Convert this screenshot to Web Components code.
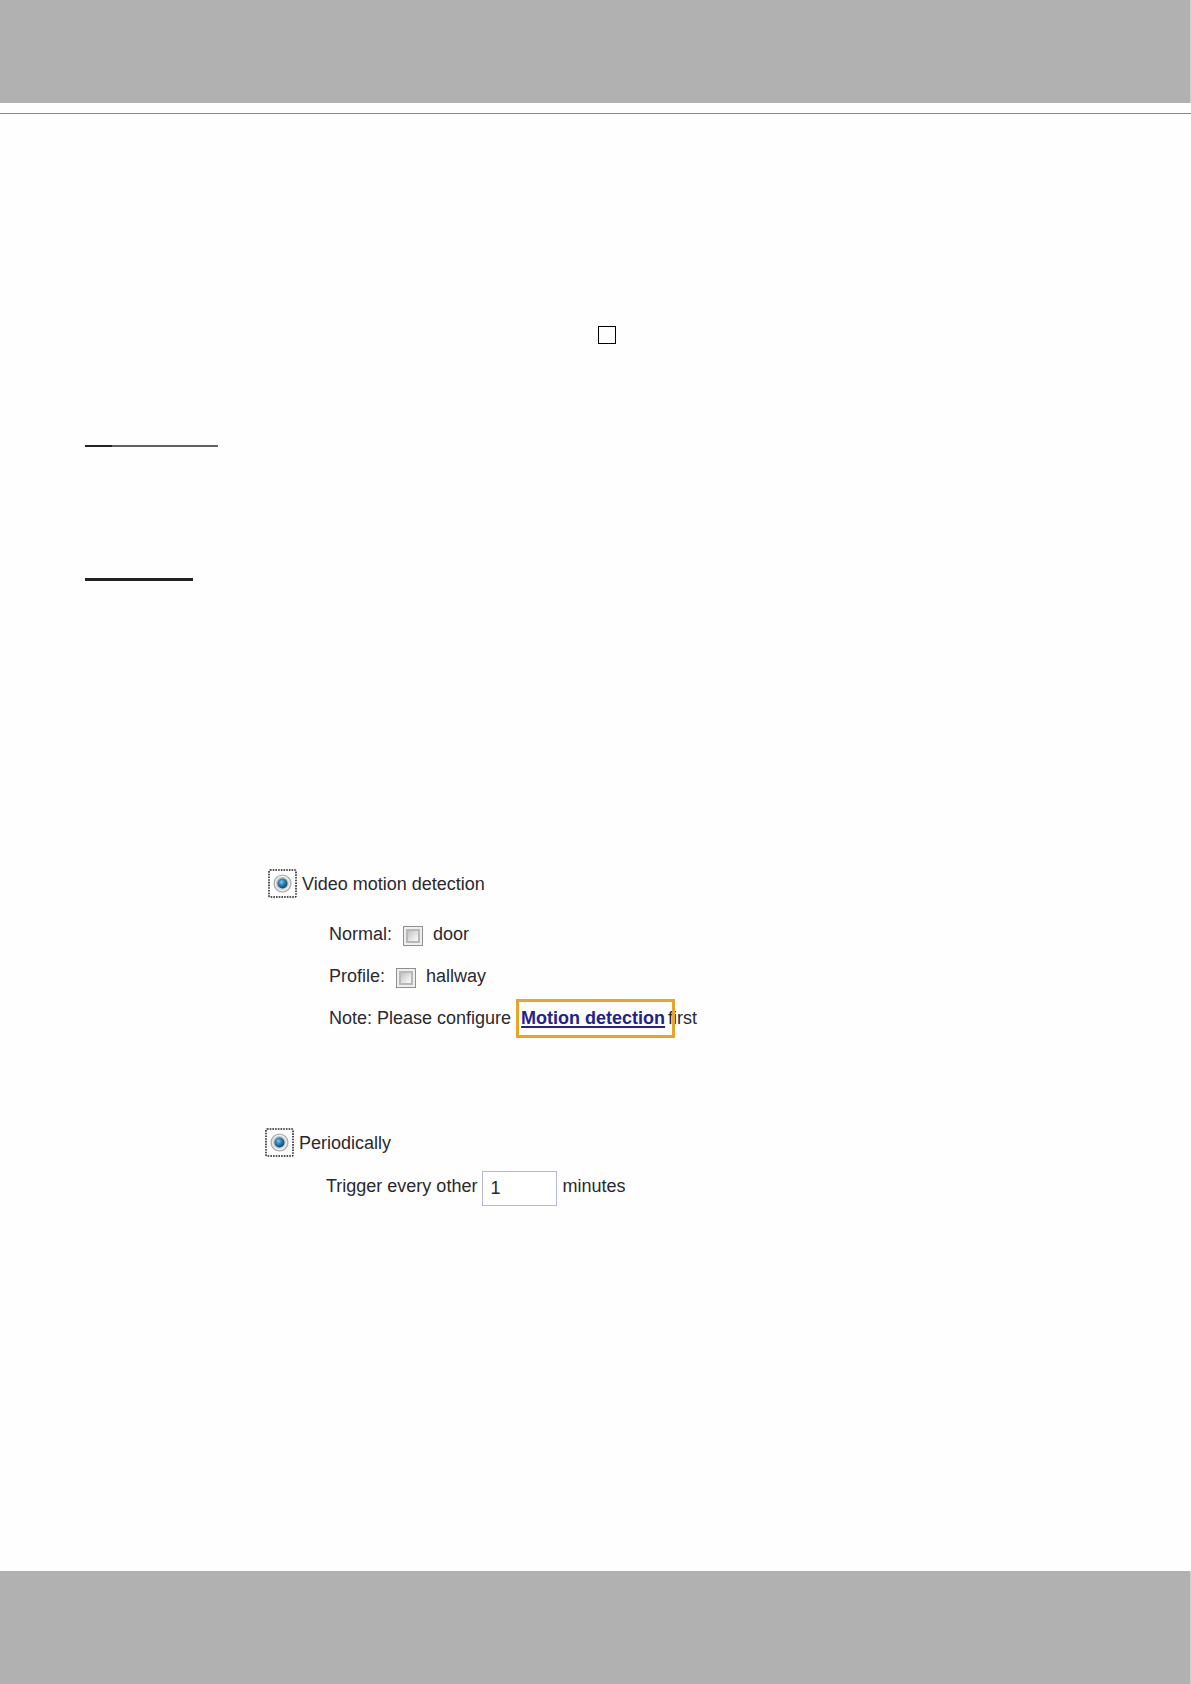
<!DOCTYPE html>
<html lang="en">
<head>
<meta charset="utf-8">
<title>Event trigger</title>
<style>
  body {
    margin: 0;
    background: #fefefe;
    color: #29292f;
    font: 18px/29px "Liberation Sans", Arial, sans-serif;
  }
</style>
</head>
<body>
<manual-page>
  <empty-mark></empty-mark>
  <heading-rule class="first"></heading-rule>
  <heading-rule class="second" heavy></heading-rule>

  <trigger-option class="motion" name="motion" label="Video motion detection">
    <check-row label="Normal:" option="door"></check-row>
    <check-row label="Profile:" option="hallway"></check-row>
    <note-row></note-row>
  </trigger-option>

  <trigger-option class="period" name="period" label="Periodically">
    <period-row value="1"></period-row>
  </trigger-option>
</manual-page>

<script>
class ManualPage extends HTMLElement {
  constructor() {
    super();
    this.attachShadow({ mode: "open" });
    this.shadowRoot.innerHTML = `
    <style>
      :host {
        display: flex;
        flex-direction: column;
        min-height: 100vh;
      }

      header, footer {
        box-sizing: border-box;
        background: #b1b1b1;
        border-right: 1px solid #cfcfcf;
      }

      header {
        height: 103px;
      }

      footer {
        height: 113px;
      }

      hr {
        width: 100%;
        height: 1px;
        margin: 10px 0 0;
        border: 0;
        background: #8a8a8a;
      }

      main {
        flex: 1;
        padding: 212px 85px 0;
      }

      ::slotted(empty-mark) { margin-left: 513px; }
      ::slotted(.first) { margin-top: 101px; }
      ::slotted(.second) { margin-top: 131px; }
      ::slotted(.motion) { margin: 288px 0 0 183px; }
      ::slotted(.period) { margin: 89px 0 0 180px; }
    </style>
    <header></header>
    <hr>
    <main><slot></slot></main>
    <footer></footer>
    `;
  }
}

// Empty square mark in the running text
class EmptyMark extends HTMLElement {
  constructor() {
    super();
    this.attachShadow({ mode: "open" });
    this.shadowRoot.innerHTML = `
    <style>
      :host {
        display: block;
        box-sizing: border-box;
        width: 18px;
        height: 18px;
        border: 1px solid #000;
      }
    </style>
    `;
  }
}

// Underline of a heading: two tone, or one thick dark line when heavy
class HeadingRule extends HTMLElement {
  constructor() {
    super();
    this.attachShadow({ mode: "open" });
    this.shadowRoot.innerHTML = `
    <style>
      :host {
        display: block;
        width: 133px;
        height: 2px;
        background: linear-gradient(to right, #222 27px, #626262 27px);
      }

      :host([heavy]) {
        width: 108px;
        height: 3px;
        background: #222;
      }
    </style>
    `;
  }
}

class TriggerOption extends HTMLElement {
  constructor() {
    super();
    this.attachShadow({ mode: "open" });
  }

  connectedCallback() {
    const name = this.getAttribute("name");
    this.shadowRoot.innerHTML = `
    <style>
      :host {
        display: block;
      }

      .head {
        display: flex;
        align-items: center;
        gap: 5px;
        height: 29px;
      }

      .head label {
        padding-top: 2px;
      }

      .radio {
        display: grid;
        width: 29px;
        height: 29px;
      }

      .radio > * {
        grid-area: 1 / 1;
      }

      input {
        appearance: none;
        width: 29px;
        height: 29px;
        margin: 0;
        outline: none;
      }

      .dot {
        visibility: hidden;
      }

      input:checked + svg .dot {
        visibility: visible;
      }

      svg {
        pointer-events: none;
      }

      .body {
        padding-left: 61px;
      }
    </style>
    <div class="head">
      <span class="radio">
        <input type="radio" id="${name}" name="${name}" checked>
        <svg width="29" height="29" viewBox="0 0 29 29" aria-hidden="true">
          <defs>
            <linearGradient id="ring" x1="0" y1="0" x2="1" y2="1">
              <stop offset="0" stop-color="#b4b4b4"/>
              <stop offset="1" stop-color="#dedede"/>
            </linearGradient>
            <radialGradient id="ball" cx="0.4" cy="0.36" r="0.7">
              <stop offset="0" stop-color="#7fd0f0"/>
              <stop offset="0.35" stop-color="#2f8fc4"/>
              <stop offset="0.75" stop-color="#1a5a88"/>
              <stop offset="1" stop-color="#12324d"/>
            </radialGradient>
          </defs>
          <rect x="1" y="1" width="27" height="27" rx="1" fill="none" stroke="#1c1c1c" stroke-width="1.5" stroke-dasharray="1.6 1.1"/>
          <circle cx="14.5" cy="14.5" r="8.4" fill="#f2f2f2" stroke="#b0b0b0" stroke-width="1.4"/>
          <circle cx="14.5" cy="14.5" r="6.5" fill="url(#ring)"/>
          <circle class="dot" cx="14.5" cy="14.5" r="5" fill="url(#ball)"/>
        </svg>
      </span>
      <label for="${name}">${this.getAttribute("label")}</label>
    </div>
    <div class="body"><slot></slot></div>
    `;
  }
}

class CheckRow extends HTMLElement {
  constructor() {
    super();
    this.attachShadow({ mode: "open" });
  }

  connectedCallback() {
    this.shadowRoot.innerHTML = `
    <style>
      :host {
        display: flex;
        align-items: center;
        gap: 10px;
        height: 42px;
      }

      :host(:first-child) {
        margin-top: 15px;
      }

      input {
        appearance: none;
        box-sizing: border-box;
        width: 20px;
        height: 20px;
        margin: 4px 0 0 1px;
        border: 1px solid #8e8e8e;
        background: linear-gradient(135deg, #c2c2c2, #f4f4f4 85%) content-box, #b8b8b8 padding-box;
        padding: 4px;
        box-shadow: inset 0 0 0 2px #efefef;
      }

      input:checked {
        background: #444 content-box;
      }
    </style>
    <span>${this.getAttribute("label")}</span>
    <input type="checkbox" id="check">
    <label for="check">${this.getAttribute("option")}</label>
    `;
  }
}

class NoteRow extends HTMLElement {
  constructor() {
    super();
    this.attachShadow({ mode: "open" });
    this.shadowRoot.innerHTML = `
    <style>
      :host {
        display: flex;
        align-items: center;
        height: 42px;
      }

      a {
        position: relative;
        margin: 0 3px 0 10px;
        color: #22228c;
        font-weight: bold;
        text-decoration-thickness: 2px;
        text-underline-offset: 2px;
        text-decoration-skip-ink: none;
      }

      /* orange callout over the link */
      a::after {
        content: "";
        position: absolute;
        inset: -5px -10px -5px -5px;
        border: 3px solid #e9a528;
      }
    </style>
    <span>Note: Please configure</span>
    <a href="#motion">Motion detection</a>
    <span>first</span>
    `;
  }
}

class PeriodRow extends HTMLElement {
  constructor() {
    super();
    this.attachShadow({ mode: "open" });
  }

  connectedCallback() {
    this.shadowRoot.innerHTML = `
    <style>
      :host {
        display: flex;
        align-items: center;
        gap: 5px;
        height: 42px;
        margin-top: 8px;
      }

      input {
        box-sizing: border-box;
        width: 75px;
        height: 35px;
        margin: 4px 0 0;
        padding: 0 7px;
        border: 1px solid #b4b9ce;
        border-radius: 0;
        background: #fff;
        color: inherit;
        font: inherit;
      }
    </style>
    <label for="every">Trigger every other</label>
    <input type="text" id="every" value="${this.getAttribute("value")}">
    <span>minutes</span>
    `;
  }
}

customElements.define("manual-page", ManualPage);
customElements.define("empty-mark", EmptyMark);
customElements.define("heading-rule", HeadingRule);
customElements.define("trigger-option", TriggerOption);
customElements.define("check-row", CheckRow);
customElements.define("note-row", NoteRow);
customElements.define("period-row", PeriodRow);
</script>
</body>
</html>
